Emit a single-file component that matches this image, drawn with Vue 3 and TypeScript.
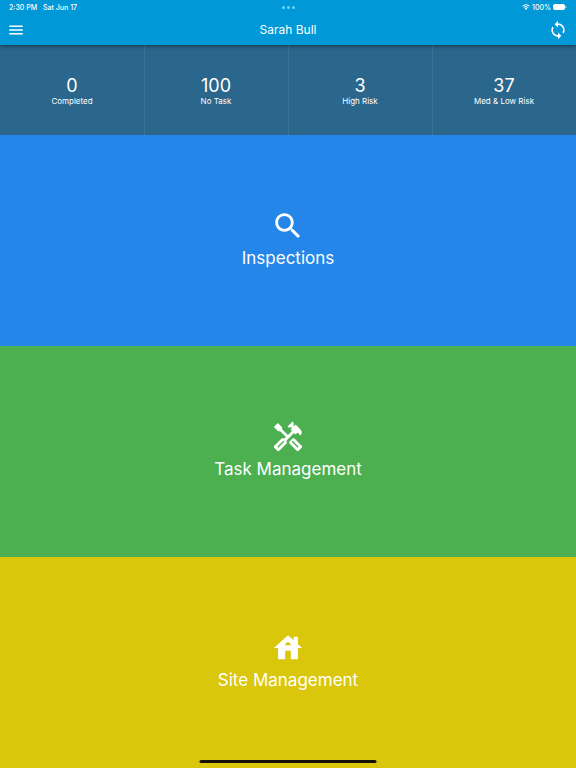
<script setup lang="ts">
interface Stat {
  value: number
  label: string
}

interface Section {
  name: string
  tone: string
  paths: string[]
}

const stats: Stat[] = [
  { value: 0, label: 'Completed' },
  { value: 100, label: 'No Task' },
  { value: 3, label: 'High Risk' },
  { value: 37, label: 'Med & Low Risk' },
]

const sections: Section[] = [
  {
    name: 'Inspections',
    tone: 'blue',
    paths: [
      'M15.5 14h-.79l-.28-.27C15.41 12.59 16 11.11 16 9.5 16 5.91 13.09 3 9.5 3S3 5.91 3 9.5 5.91 16 9.5 16c1.61 0 3.09-.59 4.23-1.57l.27.28v.79l5 4.99L20.49 19l-4.99-5zm-6 0C7.01 14 5 11.99 5 9.5S7.01 5 9.5 5 14 7.01 14 9.5 11.99 14 9.5 14z',
    ],
  },
  {
    name: 'Task Management',
    tone: 'green',
    paths: [
      'M21.67 18.17l-5.3-5.3h-.99l-2.54 2.54v.99l5.3 5.3c.39.39 1.02.39 1.41 0l2.12-2.12c.39-.38.39-1.02 0-1.41zm-2.83 1.42l-4.24-4.24.71-.71 4.24 4.24-.71.71z',
      'M17.34 10.19l1.41-1.41 2.12 2.12c1.17-1.17 1.17-3.07 0-4.24l-3.54-3.54-1.41 1.41V1.71L15.22 1l-3.54 3.54.71.71h2.83l-1.41 1.41 1.06 1.06-2.89 2.89-4.13-4.13V5.06L4.83 2.04 2 4.87 5.03 7.9h1.41l4.13 4.13-.85.85H7.6l-5.3 5.3c-.39.39-.39 1.02 0 1.41l2.12 2.12c.39.39 1.02.39 1.41 0l5.3-5.3v-2.12l5.15-5.15 1.06 1.05zm-7.98 5.15l-4.24 4.24-.71-.71 4.24-4.24.71.71z',
    ],
  },
  {
    name: 'Site Management',
    tone: 'yellow',
    paths: [
      'M19 9.3V4h-3v2.6L12 3 2 12h3v8h5v-6h4v6h5v-8h3l-3-2.7zm-9 .7c0-1.1.9-2 2-2s2 .9 2 2h-4z',
    ],
  },
]
</script>

<template>
  <div class="screen">
    <header class="top">
      <div class="status">
        <div class="status-side">
          <span>2:30 PM</span>
          <span>Sat Jun 17</span>
        </div>
        <div class="dots"><i></i><i></i><i></i></div>
        <div class="status-side status-right">
          <svg class="wifi" viewBox="0 0 16 12" aria-hidden="true">
            <path d="M1 4.4a10 10 0 0 1 14 0M3.5 7.1a6.400 6.400 0 0 1 9 0" />
            <path class="solid" d="M8 11.800 5.300 9a3.800 3.800 0 0 1 5.400 0z" />
          </svg>
          <span>100%</span>
          <svg class="battery" viewBox="0 0 14 6" aria-hidden="true">
            <rect x="0" y="0" width="12" height="6" rx="2" />
            <path d="M12.500 2c1.300 0 1.300 2 0 2z" />
          </svg>
        </div>
      </div>
      <div class="bar">
        <button class="icon-button" type="button" aria-label="Menu">
          <svg class="menu" viewBox="0 0 24 24"><path d="M3 18h18v-2H3v2zm0-5h18v-2H3v2zm0-7v2h18V6H3z" /></svg>
        </button>
        <h1>Sarah Bull</h1>
        <button class="icon-button icon-right" type="button" aria-label="Sync">
          <svg class="sync" viewBox="0 0 24 24"><path d="M12 4V1L8 5l4 4V6c3.310 0 6 2.690 6 6 0 1.010-.25 1.970-.7 2.800l1.460 1.460C19.540 15.030 20 13.570 20 12c0-4.420-3.580-8-8-8zm0 14c-3.310 0-6-2.690-6-6 0-1.010.25-1.970.7-2.800L5.240 7.740C4.460 8.970 4 10.430 4 12c0 4.420 3.580 8 8 8v3l4-4-4-4v3z" /></svg>
        </button>
      </div>
    </header>

    <dl class="stats">
      <div v-for="stat in stats" :key="stat.label" class="stat">
        <dt>{{ stat.label }}</dt>
        <dd>{{ stat.value }}</dd>
      </div>
    </dl>

    <main class="sections">
      <button v-for="section in sections" :key="section.name" type="button" class="section" :class="section.tone">
        <svg viewBox="0 0 24 24" aria-hidden="true">
          <path v-for="path in section.paths" :key="path" :d="path" />
        </svg>
        <span>{{ section.name }}</span>
      </button>
    </main>
    <div class="home-indicator"></div>
  </div>
</template>

<style>
body {
  margin: 0;
}
</style>

<style scoped>
.screen {
  display: flex;
  flex-direction: column;
  min-height: 100vh;
  position: relative;
  color: #fff;
  font-family: Inter, "Liberation Sans", sans-serif;
}

svg {
  display: block;
  fill: currentColor;
}

button {
  border: 0;
  padding: 0;
  margin: 0;
  background: none;
  color: inherit;
  font: inherit;
  cursor: pointer;
}

.top {
  position: relative;
  z-index: 1;
  background: #0098d7;
  box-shadow: 0 1px 4px rgba(0, 0, 0, 0.5);
}

.status,
.bar {
  display: grid;
  grid-template-columns: 1fr auto 1fr;
  align-items: center;
}

.status {
  height: 14px;
  padding: 0 9px;
  font-size: 7px;
  font-weight: 500;
}

.status-side {
  display: flex;
  align-items: center;
  gap: 6px;
}

.status-right {
  justify-content: flex-end;
  gap: 2px;
}

.dots {
  display: flex;
  gap: 2px;
}

.dots i {
  width: 3px;
  height: 3px;
  border-radius: 50%;
  background: #66d8fa;
}

.wifi {
  width: 8px;
  height: 6px;
  fill: none;
  stroke: currentColor;
  stroke-width: 2;
}

.wifi .solid {
  fill: currentColor;
  stroke: none;
}

.battery {
  width: 14px;
  height: 6px;
}

.bar {
  height: 31px;
  padding: 0 7px;
}

h1 {
  margin: 0;
  font-size: 12px;
  line-height: 16px;
  font-weight: 400;
}

.icon-right {
  justify-self: end;
}

.menu {
  width: 18px;
  height: 18px;
}

.sync {
  width: 22px;
  height: 20px;
}

.stats {
  display: grid;
  grid-template-columns: repeat(4, 1fr);
  height: 90px;
  margin: 0;
  background: #2b678c;
}

.stat {
  display: flex;
  flex-direction: column-reverse;
  justify-content: center;
  align-items: center;
  padding-top: 2px;
}

.stat + .stat {
  box-shadow: inset 1px 0 #3a7596;
}

dt {
  font-size: 8px;
  line-height: 10px;
}

dd {
  margin: 0;
  font-size: 18px;
  line-height: 20px;
}

.sections {
  flex: 1;
  display: grid;
  grid-template-rows: repeat(3, 1fr);
}

.section {
  display: flex;
  flex-direction: column;
  align-items: center;
  justify-content: center;
  gap: 3px;
  padding-bottom: 2px;
  font-size: 17px;
  line-height: 24px;
}

.section svg {
  width: 34px;
  height: 34px;
}

.blue {
  background: #2486e8;
}

.green {
  background: #4caf50;
}

.yellow {
  background: #dac60a;
}

.home-indicator {
  position: absolute;
  left: 50%;
  bottom: 5px;
  width: 177px;
  height: 3px;
  border-radius: 2px;
  background: #171200;
  transform: translateX(-50%);
}
</style>
